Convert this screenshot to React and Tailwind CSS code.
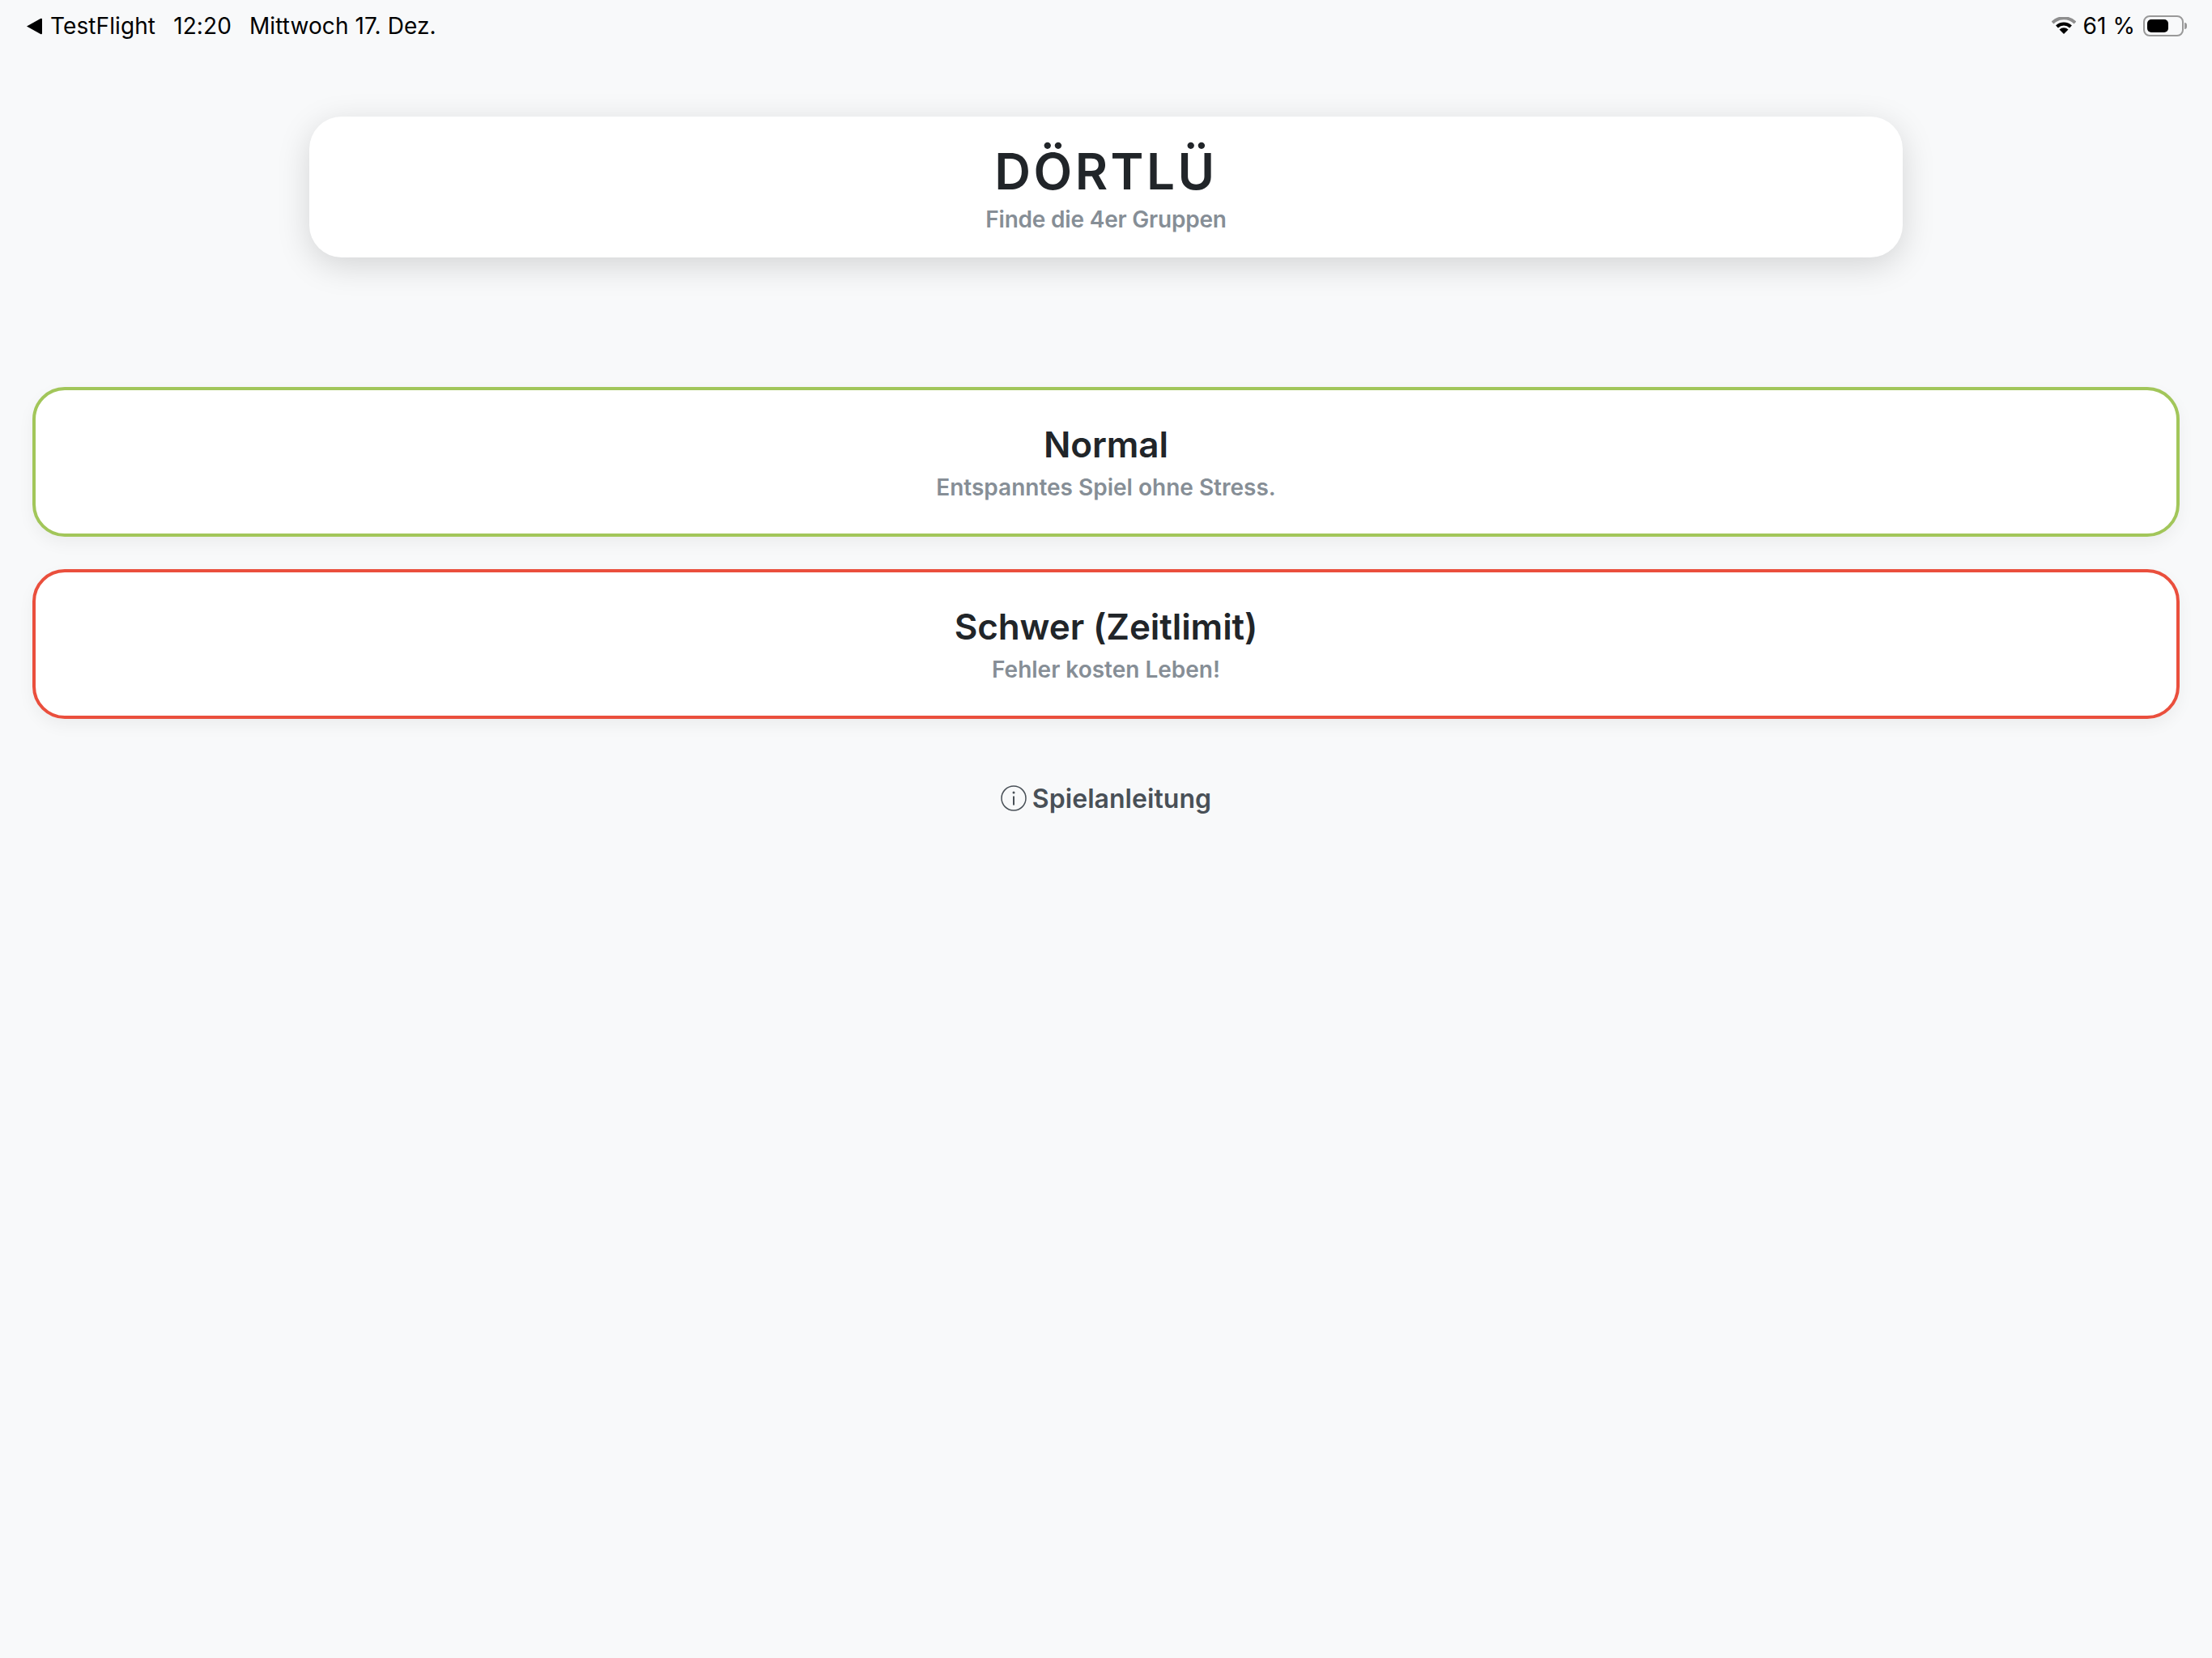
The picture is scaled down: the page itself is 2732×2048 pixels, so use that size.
import React from 'react';

const ModeCard = ({ title, subtitle, borderClass }) => (
    <button className={`flex flex-col items-center w-full h-[185px] pt-[40px] bg-white rounded-[40px] border-4 ${borderClass} shadow-[0_8px_20px_rgba(0,0,0,0.05)]`}>
        <span className="text-[44px] leading-[54px] font-semibold tracking-[-0.1px] text-[#212529]">{title}</span>
        <span className="mt-[8px] text-[28px] leading-[36px] font-semibold text-[#868e96]">{subtitle}</span>
    </button>
);

const StatusBar = () => (
    <div className="flex items-center justify-between h-[64px] pl-[33px] pr-[35px] text-[28px] tracking-[0.1px] text-black">
        <div className="flex items-center">
            <svg width="19" height="21" viewBox="0 0 19 21" className="mr-[10px]">
                <path d="M0 10.5 L17 1 Q19 0 19 2 V19 Q19 21 17 20 Z" fill="#000" />
            </svg>
            <span>TestFlight</span>
            <span className="ml-[22px]">12:20</span>
            <span className="ml-[22px]">Mittwoch 17. Dez.</span>
        </div>
        <div className="flex items-center">
            <svg width="30" height="22" viewBox="0 0 30 22" className="mr-[8px]">
                <path d="M1 7 A20 20 0 0 1 29 7" fill="none" stroke="#8e8e8e" strokeWidth="4" />
                <path d="M6.5 12 A12 12 0 0 1 23.5 12" fill="none" stroke="#000" strokeWidth="4" />
                <path d="M15 21 L9.5 15.5 A8 8 0 0 1 20.5 15.5 Z" fill="#000" />
            </svg>
            <span>61 %</span>
            <div className="relative flex items-center ml-[10px] w-[50px] h-[26px] p-[3px] rounded-[8px] border-2 border-[#999999]">
                <div className="w-[26px] h-full rounded-[5px] bg-black" />
                <div className="absolute right-[-6px] w-[3px] h-[8px] rounded-r-full bg-[#999999]" />
            </div>
        </div>
    </div>
);

const App = () => {
    return (
        <div className="w-full h-[2048px] bg-[#f8f9fa] font-['Inter',sans-serif]">
            <StatusBar />
            <div className="flex flex-col items-center w-[1968px] h-[174px] mt-[80px] mx-auto pt-[33px] bg-white rounded-[40px] shadow-[0_10px_40px_rgba(0,0,0,0.15)]">
                <h1 className="text-[62px] leading-[70px] font-semibold tracking-[3.5px] text-[#212529]">DÖRTLÜ</h1>
                <p className="mt-[6px] text-[28px] leading-[36px] font-semibold tracking-[-0.2px] text-[#868e96]">Finde die 4er Gruppen</p>
            </div>
            <div className="flex flex-col gap-[40px] mt-[160px] px-[40px]">
                <ModeCard title="Normal" subtitle="Entspanntes Spiel ohne Stress." borderClass="border-[#a2c65a]" />
                <ModeCard title="Schwer (Zeitlimit)" subtitle="Fehler kosten Leben!" borderClass="border-[#ea4f3d]" />
            </div>
            <div className="flex items-center justify-center gap-[7px] mt-[79px] text-[#495057]">
                <svg width="32" height="32" viewBox="0 0 32 32" className="mt-[-2px]">
                    <circle cx="16" cy="16" r="15" fill="none" stroke="#495057" strokeWidth="1.5" />
                    <rect x="15" y="13.5" width="2" height="11" fill="#495057" />
                    <circle cx="16" cy="9" r="1.5" fill="#495057" />
                </svg>
                <span className="text-[32px] leading-[40px] font-semibold tracking-[0.05px]">Spielanleitung</span>
            </div>
        </div>
    );
};

export default App;
